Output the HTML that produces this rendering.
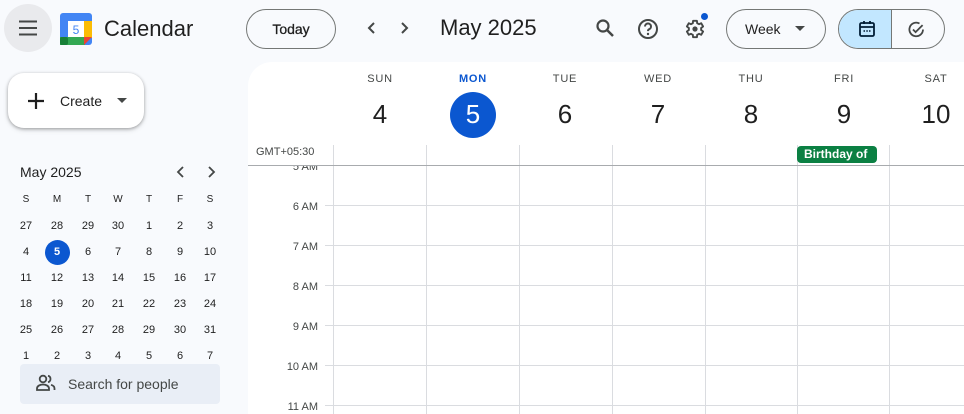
<!DOCTYPE html>
<html><head><meta charset="utf-8"><style>
*{box-sizing:border-box;margin:0;padding:0}
body{width:964px;height:414px;overflow:hidden;background:#f8fafd;font-family:"Liberation Sans",sans-serif;color:#1f1f1f;position:relative}
.a{position:absolute}
.c{text-align:center}
.btn{position:absolute;border:1px solid #747775;border-radius:20px;height:40px;font-size:14px;display:flex;align-items:center;justify-content:center;color:#1f1f1f}
.mc{position:absolute;width:20px;text-align:center;font-size:11px;color:#1f1f1f}
.vl{position:absolute;top:145px;width:1px;height:269px;background:#dadce0}
.hl{position:absolute;left:325px;width:639px;height:1px;background:#dadce0}
.tl{position:absolute;left:258px;width:60px;text-align:right;font-size:11px;color:#444746}
.dn{position:absolute;width:60px;text-align:center;font-size:11px;letter-spacing:.8px;color:#444746;top:73px}
.dd{position:absolute;width:60px;text-align:center;font-size:26px;color:#1f1f1f;top:99px}
</style></head><body>
<div class="a" style="left:4px;top:4px;width:48px;height:48px;border-radius:50%;background:#e9eaed"></div>
<svg class="a" style="left:18px;top:19px" width="20" height="18" viewBox="0 0 20 18"><path d="M1 2.5h18M1 9h18M1 15.5h18" stroke="#444746" stroke-width="2"/></svg>
<svg class="a" style="left:60px;top:13px" width="32" height="32" viewBox="0 0 32 32">
<rect x="0" y="0" width="32" height="32" rx="3" fill="#4285f4"/>
<rect x="24" y="8" width="8" height="17" fill="#fbbc04"/>
<rect x="0" y="24" width="25" height="8" fill="#34a853"/>
<rect x="0" y="24" width="8" height="8" rx="2" fill="#188038"/>
<path d="M24 24h8l-8 8z" fill="#ea4335"/>
<rect x="8" y="8" width="16" height="16" fill="#fff"/>
<text x="16" y="21" font-size="12" text-anchor="middle" fill="#4285f4" font-family="Liberation Sans">5</text>
</svg>
<div class="a" style="left:104px;top:16px;font-size:22px;color:#1f1f1f">Calendar</div>
<div class="btn" style="left:246px;top:9px;width:90px;font-size:14px;-webkit-text-stroke:.3px #1f1f1f">Today</div>
<svg class="a" style="left:364px;top:20px" width="16" height="16" viewBox="0 0 16 16"><path d="M10 3L5 8l5 5" stroke="#444746" stroke-width="2" fill="none"/></svg>
<svg class="a" style="left:396px;top:20px" width="16" height="16" viewBox="0 0 16 16"><path d="M6 3l5 5-5 5" stroke="#444746" stroke-width="2" fill="none"/></svg>
<div class="a" style="left:440px;top:15px;font-size:22px;color:#1f1f1f">May 2025</div>
<svg class="a" style="left:595px;top:18px" width="20" height="20" viewBox="0 0 20 20"><circle cx="8" cy="8" r="5.5" stroke="#444746" stroke-width="2.2" fill="none"/><path d="M12 12l6 6" stroke="#444746" stroke-width="2.5"/></svg>
<svg class="a" style="left:637px;top:18px" width="22" height="22" viewBox="0 0 22 22"><circle cx="11" cy="11" r="9" stroke="#444746" stroke-width="2" fill="none"/><path d="M8 8.5a3 3 0 1 1 4 2.8c-.8.4-1 .9-1 1.8" stroke="#444746" stroke-width="2" fill="none"/><circle cx="11" cy="16" r="1.2" fill="#444746"/></svg>
<svg class="a" style="left:682px;top:17px" width="24" height="24" viewBox="0 0 24 24"><path fill="none" stroke="#444746" stroke-width="1.9" stroke-linejoin="round" d="M18.6 13a6.8 6.8 0 0 0 0-2l2-1.5-1.9-3.3-2.3 1a6.5 6.5 0 0 0-1.7-1L14.4 3.8h-3.8l-.3 2.4a6.5 6.5 0 0 0-1.7 1l-2.3-1-1.9 3.3 2 1.5a6.8 6.8 0 0 0 0 2l-2 1.5 1.9 3.3 2.3-1a6.5 6.5 0 0 0 1.7 1l.3 2.4h3.8l.3-2.4a6.5 6.5 0 0 0 1.7-1l2.3 1 1.9-3.3z" transform="translate(0.5 0)"/><circle cx="13" cy="12" r="2.6" fill="#444746"/></svg>
<div class="a" style="left:701px;top:13px;width:7px;height:7px;border-radius:50%;background:#0b57d0"></div>
<div class="btn" style="left:726px;top:9px;width:100px;justify-content:flex-start;padding-left:18px;font-size:14px">Week<svg style="margin-left:14px" width="10" height="6" viewBox="0 0 10 6"><path d="M0 0h10L5 5z" fill="#444746"/></svg></div>
<div class="a" style="left:838px;top:9px;width:107px;height:40px;border:1px solid #747775;border-radius:20px;overflow:hidden">
<div class="a" style="left:0;top:0;width:53px;height:40px;background:#c2e7ff;border-right:1px solid #747775"></div>
<svg class="a" style="left:19px;top:10px" width="18" height="18" viewBox="0 0 18 18"><rect x="2" y="3" width="14" height="13" rx="1.5" stroke="#001d35" stroke-width="1.8" fill="none"/><path d="M2 7h14M6 1v3M12 1v3" stroke="#001d35" stroke-width="1.8"/><path d="M5.5 11h1.5M8.3 11h1.5M11 11h1.5" stroke="#001d35" stroke-width="1.5"/></svg>
<svg class="a" style="left:68px;top:10px" width="19" height="19" viewBox="0 0 19 19"><path d="M16 9.5A6.8 6.8 0 1 1 12.5 3.5" stroke="#444746" stroke-width="1.8" fill="none"/><path d="M6 9.5l2.6 2.6 7-7" stroke="#444746" stroke-width="1.8" fill="none"/></svg>
</div>
<div class="a" style="left:8px;top:73px;width:136px;height:55px;border-radius:16px;background:#fff;box-shadow:0 1px 3px rgba(0,0,0,.3),0 2px 6px rgba(0,0,0,.12)"></div>
<svg class="a" style="left:26px;top:91px" width="20" height="20" viewBox="0 0 20 20"><path d="M10 2v16M2 10h16" stroke="#1f1f1f" stroke-width="2.2"/></svg>
<div class="a" style="left:60px;top:93px;font-size:14px;color:#1f1f1f">Create</div>
<svg class="a" style="left:117px;top:98px" width="10" height="6" viewBox="0 0 10 6"><path d="M0 0h10L5 5z" fill="#444746"/></svg>
<div class="a" style="left:20px;top:164px;font-size:14px;color:#1f1f1f">May 2025</div>
<svg class="a" style="left:174px;top:165px" width="14" height="14" viewBox="0 0 14 14"><path d="M9 2L4 7l5 5" stroke="#444746" stroke-width="1.8" fill="none"/></svg>
<svg class="a" style="left:204px;top:165px" width="14" height="14" viewBox="0 0 14 14"><path d="M5 2l5 5-5 5" stroke="#444746" stroke-width="1.8" fill="none"/></svg>
<div class="a" style="left:45px;top:240px;width:25px;height:25px;border-radius:50%;background:#0b57d0"></div>
<div id="mini"></div>
<div class="a" style="left:20px;top:364px;width:200px;height:40px;border-radius:4px;background:#e9eef6"></div>
<svg class="a" style="left:36px;top:374px" width="20" height="18" viewBox="0 0 20 18"><circle cx="7" cy="5" r="3.3" stroke="#444746" stroke-width="1.8" fill="none"/><path d="M1 16v-1.5c0-2.5 3-4 6-4s6 1.5 6 4V16z" stroke="#444746" stroke-width="1.8" fill="none"/><path d="M12 1.8a3.3 3.3 0 0 1 0 6.4M15 10.8c2 .6 3.5 1.8 3.5 3.7V16" stroke="#444746" stroke-width="1.8" fill="none"/></svg>
<div class="a" style="left:68px;top:376px;font-size:14px;color:#444746">Search for people</div>
<div class="a" style="left:248px;top:62px;width:716px;height:352px;background:#fff;border-top-left-radius:24px"></div>
<div id="grid"></div>
<div class="a" style="left:256px;top:146px;font-size:11px;color:#444746">GMT+05:30</div>
<div class="a" style="left:797px;top:146px;width:80px;height:17px;border-radius:4px;background:#0b8043;color:#fff;font-size:12px;font-weight:bold;padding-left:7px;line-height:17px">Birthday of</div>
<div class="a" style="left:450px;top:92px;width:46px;height:46px;border-radius:50%;background:#0b57d0"></div>
<script>
var h='';
var days=['S','M','T','W','T','F','S'];
var xs=[26,57,88,118,149,180,210];
var nums=[[27,28,29,30,1,2,3],[4,5,6,7,8,9,10],[11,12,13,14,15,16,17],[18,19,20,21,22,23,24],[25,26,27,28,29,30,31],[1,2,3,4,5,6,7]];
for(var i=0;i<7;i++)h+='<div class="mc" style="left:'+(xs[i]-10)+'px;top:194px;font-size:10px">'+days[i]+'</div>';
for(var r=0;r<6;r++)for(var i=0;i<7;i++){var s=(r==1&&i==1)?'color:#fff;font-weight:bold;':'';h+='<div class="mc" style="left:'+(xs[i]-10)+'px;top:'+(220+r*26)+'px;'+s+'">'+nums[r][i]+'</div>';}
document.getElementById('mini').innerHTML=h;
var g='';
var vx=[333,426,519,612,705,797,889];
vx.forEach(function(x){g+='<div class="vl" style="left:'+x+'px"></div>'});
g+='<div class="a" style="left:248px;top:165px;width:716px;height:1px;background:#a8abae"></div>';
var tl=['6 AM','7 AM','8 AM','9 AM','10 AM','11 AM'];
for(var k=0;k<6;k++){var y=205+k*40;g+='<div class="hl" style="top:'+y+'px"></div><div class="tl" style="top:'+(y-4)+'px">'+tl[k]+'</div>';}
g+='<div class="tl" style="top:166px;height:6px;overflow:hidden;line-height:2px">5 AM</div>';
var dn=['SUN','MON','TUE','WED','THU','FRI','SAT'],dd=[4,5,6,7,8,9,10],cx=[380,473,565,658,751,844,936];
for(var i=0;i<7;i++){g+='<div class="dn" style="left:'+(cx[i]-30)+'px;'+(i==1?'color:#0b57d0;font-weight:bold':'')+'">'+dn[i]+'</div>';g+='<div class="dd" style="left:'+(cx[i]-30)+'px;z-index:2;'+(i==1?'color:#fff':'')+'">'+dd[i]+'</div>';}
document.getElementById('grid').innerHTML=g;
</script>
</body></html>
